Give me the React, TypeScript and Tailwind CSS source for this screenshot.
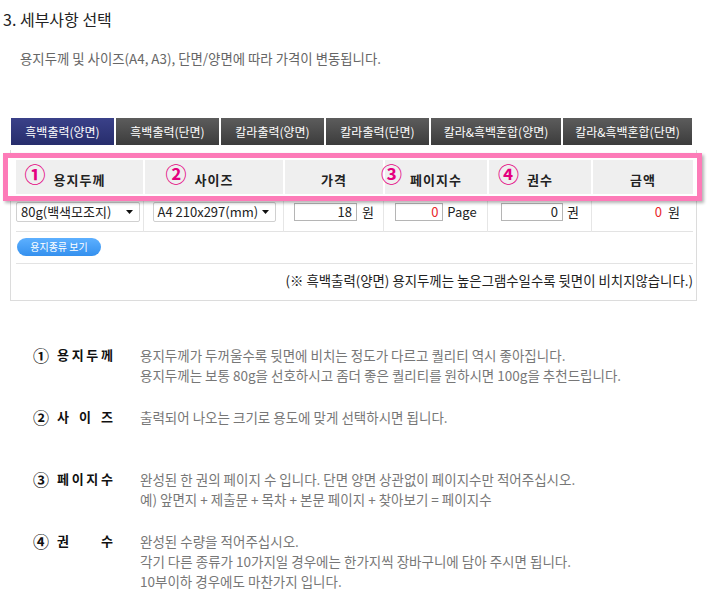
const tabs = [
  { label: '흑백출력(양면)', w: 'w-[103px]', active: true },
  { label: '흑백출력(단면)', w: 'w-[103px]', active: false },
  { label: '칼라출력(양면)', w: 'w-[103px]', active: false },
  { label: '칼라출력(단면)', w: 'w-[103px]', active: false },
  { label: '칼라&흑백혼합(양면)', w: 'w-[130px]', active: false },
  { label: '칼라&흑백혼합(단면)', w: 'w-[129px]', active: false },
]

const headers = [
  { no: '①', label: '용지두께' },
  { no: '②', label: '사이즈' },
  { no: '', label: '가격' },
  { no: '③', label: '페이지수' },
  { no: '④', label: '권수' },
  { no: '', label: '금액' },
]

const guides = [
  {
    no: '①',
    label: ['용', '지', '두', '께'],
    lines: [
      '용지두께가 두꺼울수록 뒷면에 비치는 정도가 다르고 퀄리티 역시 좋아집니다.',
      '용지두께는 보통 80g을 선호하시고 좀더 좋은 퀄리티를 원하시면 100g을 추천드립니다.',
    ],
  },
  {
    no: '②',
    label: ['사', '이', '즈'],
    lines: ['출력되어 나오는 크기로 용도에 맞게 선택하시면 됩니다.'],
  },
  {
    no: '③',
    label: ['페', '이', '지', '수'],
    lines: [
      '완성된 한 권의 페이지 수 입니다. 단면 양면 상관없이 페이지수만 적어주십시오.',
      '예) 앞면지 + 제출문 + 목차 + 본문 페이지 + 찾아보기 = 페이지수',
    ],
  },
  {
    no: '④',
    label: ['권', '수'],
    lines: [
      '완성된 수량을 적어주십시오.',
      '각기 다른 종류가 10가지일 경우에는 한가지씩 장바구니에 담아 주시면 됩니다.',
      '10부이하 경우에도 마찬가지 입니다.',
    ],
  },
]

function Arrow() {
  return (
    <svg width="7" height="4" viewBox="0 0 7 4">
      <path d="M0 0h7L3.5 4z" fill="#111" />
    </svg>
  )
}

function FakeSelect({ text, width }: { text: string; width: string }) {
  return (
    <div className={`${width} h-[20px] flex items-center justify-between border border-[#d0d0d0] rounded-[2px] pl-[4px] pr-[6px] text-[13px] leading-[18px] text-[#222]`}>
      <span>{text}</span>
      <Arrow />
    </div>
  )
}

function NumInput({ value, width, red }: { value: string; width: string; red?: boolean }) {
  return (
    <div className={`${width} h-[18px] border border-[#b5b5b5] pr-[4px] text-right text-[13px] leading-[16px] ${red ? 'text-[#e8262a]' : 'text-[#222]'}`}>
      {value}
    </div>
  )
}

const divider =
  "relative before:absolute before:left-[-2px] before:top-[-8px] before:h-[38px] before:w-px before:bg-[#e6e6e6]"

export default function App() {
  return (
    <div className="w-[710px] h-[610px] bg-white text-[#222] font-['Noto_Sans_CJK_KR','Noto_Sans',sans-serif]">
      <h2 className="pt-[9px] pl-[3px] text-[16px] leading-[20px] font-normal text-[#222]">3. 세부사항 선택</h2>
      <p className="mt-[20px] pl-[20px] text-[13.4px] leading-[18px] text-[#666]">
        용지두께 및 사이즈(A4, A3), 단면/양면에 따라 가격이 변동됩니다.
      </p>

      {/* tabs */}
      <div className="mt-[51px] ml-[11px] flex gap-[2px]">
        {tabs.map((t) => (
          <div
            key={t.label}
            className={`${t.w} h-[27px] flex items-center justify-center text-[12px] text-white ${
              t.active
                ? 'bg-[linear-gradient(180deg,#3a4189_0%,#272d6c_100%)]'
                : 'bg-[linear-gradient(180deg,#5c5c5c_0%,#3c3c3c_100%)]'
            }`}
          >
            {t.label}
          </div>
        ))}
      </div>

      {/* option panel */}
      <div className="relative mt-[5px] ml-[10px] w-[687px] border-x border-b border-[#dcdcdc] pl-[5px] pr-[3px] pt-[10px]">
        {/* highlight box */}
        <div className="pointer-events-none absolute left-[-8px] top-[3px] z-[5] h-[48px] w-[699px] border-[5px] border-[#fd7bb8] bg-white shadow-[2px_2px_3px_rgba(0,0,0,0.3)]" />

        <div className="relative z-10 grid h-[34px] grid-cols-[127px_138px_98px_102px_102px_100px] gap-x-[2px]">
          {headers.map((h) => (
            <div key={h.label} className="flex items-center justify-center bg-[#efefef]">
              <span className="relative mt-[6px] text-[13px] font-bold leading-[16px] tracking-[1px] text-[#222]">
                {h.no && (
                  <span className="absolute right-full top-[-10px] mr-[8px] text-[21px] font-bold leading-[22px] tracking-normal text-[#e4007f]">
                    {h.no}
                  </span>
                )}
                {h.label}
              </span>
            </div>
          ))}
        </div>

        {/* data row */}
        <div className="grid h-[38px] grid-cols-[127px_138px_98px_102px_102px_100px] items-start gap-x-[2px] border-b border-[#e3e3e3] pt-[8px]">
          <div>
            <FakeSelect text="80g(백색모조지)" width="w-[124px]" />
          </div>
          <div className={`${divider} flex justify-center`}>
            <FakeSelect text="A4 210x297(mm)" width="w-[123px]" />
          </div>
          <div className={`${divider} flex items-center justify-center gap-[5px] pt-[1px] text-[13px] leading-[18px]`}>
            <NumInput value="18" width="w-[63px]" />
            <span>원</span>
          </div>
          <div className={`${divider} flex items-center justify-center gap-[4px] pt-[1px] text-[13px] leading-[18px]`}>
            <NumInput value="0" width="w-[48px]" red />
            <span>Page</span>
          </div>
          <div className={`${divider} flex items-center justify-center gap-[4px] pt-[1px] text-[13px] leading-[18px]`}>
            <NumInput value="0" width="w-[62px]" />
            <span>권</span>
          </div>
          <div className={`${divider} flex items-center justify-end gap-[6px] pr-[13px] pt-[1px] text-[13px] leading-[18px]`}>
            <span className="text-[#e8262a]">0</span>
            <span>원</span>
          </div>
        </div>

        {/* paper button */}
        <div className="border-b border-[#e3e3e3] pt-[6px] pb-[7px]">
          <button className="ml-[1px] block h-[18px] w-[84px] rounded-full bg-[linear-gradient(180deg,#5db0ff_0%,#3490ee_100%)] text-center text-[10px] leading-[18px] text-white">
            용지종류 보기
          </button>
        </div>

        <p className="pt-[7px] pb-[11px] text-right text-[13.4px] leading-[18px] text-[#222]">
          (※ 흑백출력(양면) 용지두께는 높은그램수일수록 뒷면이 비치지않습니다.)
        </p>
      </div>

      {/* guide */}
      <div className="mt-[44px]">
        {guides.map((g) => (
          <div key={g.no} className="flex h-[62px]">
            <div className="flex w-[140px] shrink-0 pl-[33px] text-[13px] font-bold leading-[20px] text-[#111]">
              <span className="w-[24px] text-[16px] leading-[20px]">{g.no}</span>
              <span className="flex w-[56px] justify-between">
                {g.label.map((c, i) => (
                  <span key={i}>{c}</span>
                ))}
              </span>
            </div>
            <div className="text-[13.5px] leading-[20px] text-[#777]">
              {g.lines.map((l) => (
                <p key={l}>{l}</p>
              ))}
            </div>
          </div>
        ))}
      </div>
    </div>
  )
}
